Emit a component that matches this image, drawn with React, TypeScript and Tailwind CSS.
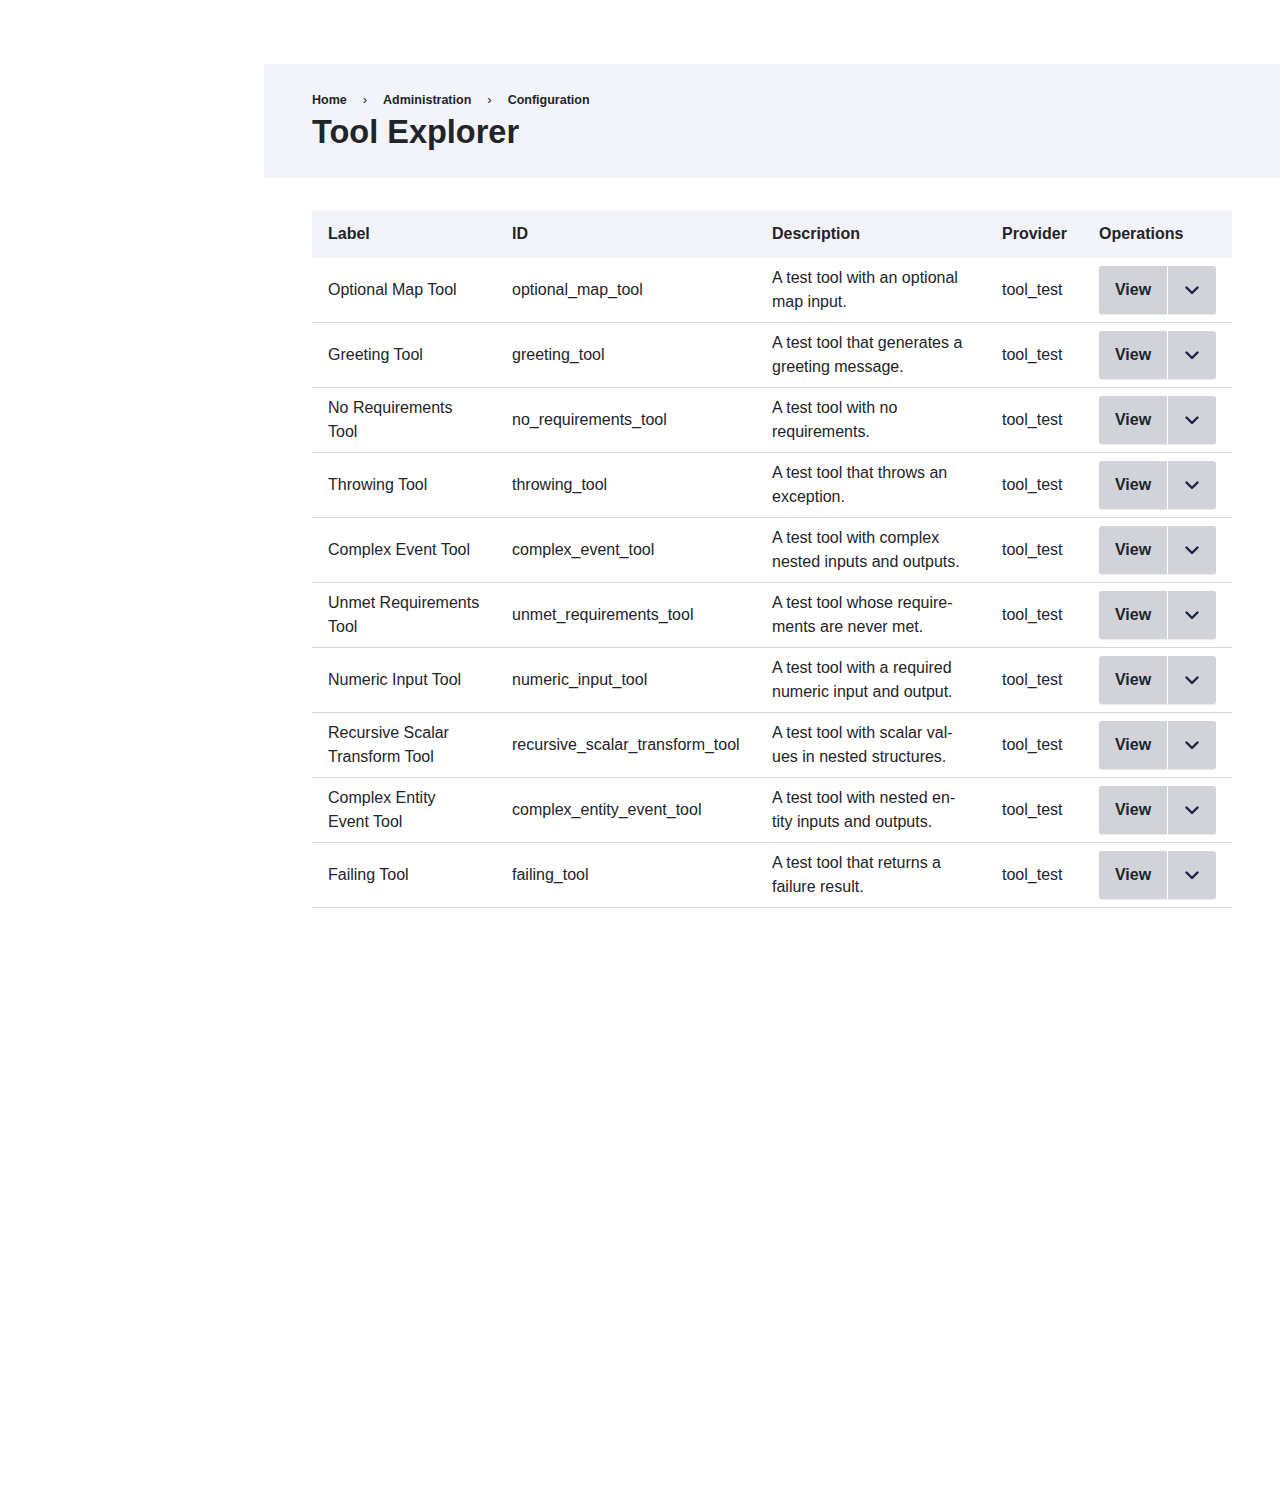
type Tool = {
  label: string;
  id: string;
  description: string;
  provider: string;
};

const tools: Tool[] = [
  { label: "Optional Map Tool", id: "optional_map_tool", description: "A test tool with an optional map input.", provider: "tool_test" },
  { label: "Greeting Tool", id: "greeting_tool", description: "A test tool that generates a greeting message.", provider: "tool_test" },
  { label: "No Requirements Tool", id: "no_requirements_tool", description: "A test tool with no requirements.", provider: "tool_test" },
  { label: "Throwing Tool", id: "throwing_tool", description: "A test tool that throws an exception.", provider: "tool_test" },
  { label: "Complex Event Tool", id: "complex_event_tool", description: "A test tool with complex nested inputs and outputs.", provider: "tool_test" },
  { label: "Unmet Requirements Tool", id: "unmet_requirements_tool", description: "A test tool whose require\u00ADments are never met.", provider: "tool_test" },
  { label: "Numeric Input Tool", id: "numeric_input_tool", description: "A test tool with a required numeric input and output.", provider: "tool_test" },
  { label: "Recursive Scalar Transform Tool", id: "recursive_scalar_transform_tool", description: "A test tool with scalar val\u00ADues in nested structures.", provider: "tool_test" },
  { label: "Complex Entity Event Tool", id: "complex_entity_event_tool", description: "A test tool with nested en\u00ADtity inputs and outputs.", provider: "tool_test" },
  { label: "Failing Tool", id: "failing_tool", description: "A test tool that returns a failure result.", provider: "tool_test" },
];

const crumbs = ["Home", "Administration", "Configuration"];

function Chevron() {
  return (
    <svg width="14" height="9" viewBox="0 0 14 9" fill="none" stroke="currentColor" strokeWidth="2.4" strokeLinecap="round" strokeLinejoin="round">
      <polyline points="1.5,1.5 7,7 12.5,1.5" />
    </svg>
  );
}

export default function App() {
  return (
    <div className="min-h-[1500px] bg-white pt-16 pl-[264px] text-[#232429] font-['Liberation_Sans',Arial,sans-serif]">
      {/* Page header */}
      <header className="bg-[#f3f4f9] px-12 pt-6 pb-[26px]">
        <nav className="flex items-center h-6 text-[12.5px] font-bold">
          {crumbs.map((c, i) => (
            <div key={c} className="flex items-center">
              {i > 0 && <span className="px-4 text-[13px] font-normal">›</span>}
              <span>{c}</span>
            </div>
          ))}
        </nav>
        <h1 className="text-[32.5px] leading-10 font-bold">Tool Explorer</h1>
      </header>

      {/* Tools table */}
      <main className="px-12 pt-8">
        <table className="w-full border-collapse text-base leading-6 table-fixed">
          <colgroup>
            <col className="w-[184px]" />
            <col className="w-[260px]" />
            <col className="w-[230px]" />
            <col className="w-[97px]" />
            <col className="w-[149px]" />
          </colgroup>
          <thead>
            <tr className="bg-[#f3f4f9] h-12 text-left font-bold">
              <th className="px-4">Label</th>
              <th className="px-4">ID</th>
              <th className="px-4">Description</th>
              <th className="px-4">Provider</th>
              <th className="px-4">Operations</th>
            </tr>
          </thead>
          <tbody>
            {tools.map((t) => (
              <tr key={t.id} className="border-b border-[#d5d6db]">
                <td className="px-4 py-2 h-16 align-middle">{t.label}</td>
                <td className="px-4 py-2 align-middle">{t.id}</td>
                <td className="px-4 py-2 align-middle">{t.description}</td>
                <td className="px-4 py-2 align-middle">{t.provider}</td>
                <td className="px-4 py-2 align-middle">
                  <div className="flex h-12 w-[117px] rounded-[3px] bg-[#d2d3d9] shadow-[0_1px_1px_rgba(0,0,0,0.08)]">
                    <button className="w-[69px] font-bold text-[#232429] border-r border-white">View</button>
                    <button className="flex-1 flex items-center justify-center text-[#1b2447]">
                      <Chevron />
                    </button>
                  </div>
                </td>
              </tr>
            ))}
          </tbody>
        </table>
      </main>
    </div>
  );
}
